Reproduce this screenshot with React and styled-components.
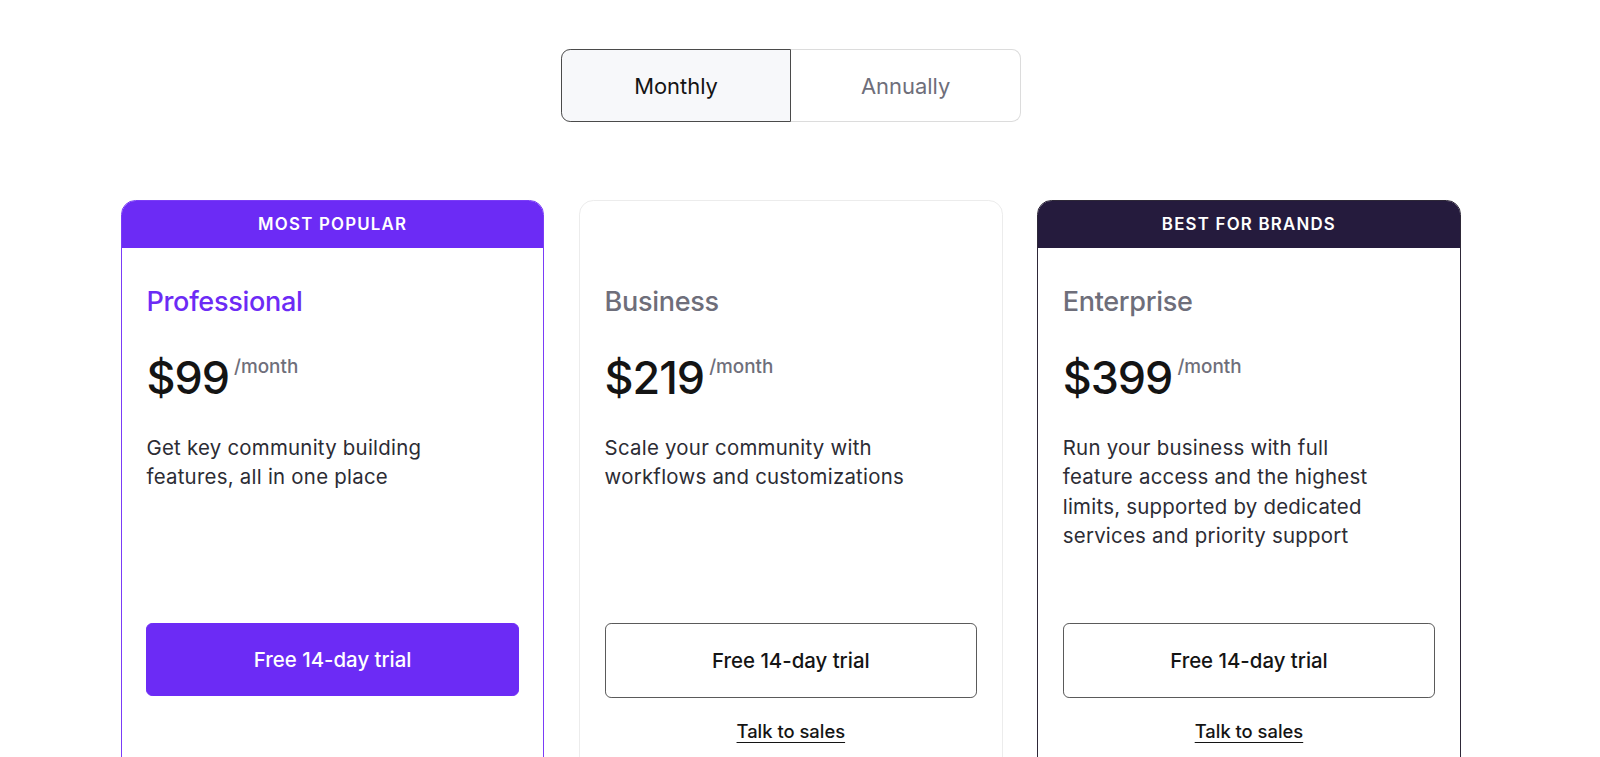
import React from 'react';
import styled, { createGlobalStyle } from 'styled-components';

const Global = createGlobalStyle`
  body {
    margin: 0;
    background: #fff;
    font-family: Inter, "Noto Sans", sans-serif;
    color: #141414;
    overflow: hidden;
  }
`;

const Page = styled.div`
  display: flex;
  flex-direction: column;
  align-items: center;
  padding: 48px 18px 0 0;
  height: 742px;
  overflow: hidden;
  box-sizing: border-box;
  zoom: 1.0204;
`;

const Toggle = styled.div`
  display: flex;
  flex-shrink: 0;
  width: 451px;
  height: 72px;
`;

const ToggleOption = styled.button`
  flex: 1;
  font-family: inherit;
  font-size: 21.5px;
  font-weight: 400;
  cursor: pointer;
  color: ${p => (p.active ? '#141414' : '#6e6e7a')};
  background: ${p => (p.active ? '#f7f8fa' : '#fff')};
  border: 1px solid ${p => (p.active ? '#4a4a4a' : '#dcdcdc')};
  border-radius: ${p => (p.left ? '9px 0 0 9px' : '0 9px 9px 0')};
  ${p => (p.left ? '' : 'border-left: none;')}
`;

const Cards = styled.div`
  display: flex;
  flex-shrink: 0;
  gap: 34px;
  margin-top: 76px;
`;

const Card = styled.div`
  width: 415px;
  height: 600px;
  flex-shrink: 0;
  box-sizing: border-box;
  border: 1px solid ${p => p.border};
  border-radius: 14px;
  overflow: hidden;
  display: flex;
  flex-direction: column;
`;

const Banner = styled.div`
  height: 47px;
  flex-shrink: 0;
  background: ${p => p.bg || 'transparent'};
  color: #fff;
  font-size: 16.5px;
  font-weight: 600;
  letter-spacing: 1.2px;
  display: flex;
  align-items: center;
  justify-content: center;
  margin: -1px -1px 0;
`;

const Body = styled.div`
  padding: 36px 24px 0 24px;
  display: flex;
  flex-direction: column;
`;

const Title = styled.h3`
  margin: 0;
  font-size: 26.5px;
  font-weight: 500;
  letter-spacing: -0.3px;
  color: ${p => p.color};
  line-height: 34px;
`;

const PriceRow = styled.div`
  display: flex;
  align-items: flex-start;
  margin-top: 30px;
  height: 56px;
`;

const Price = styled.span`
  font-size: 44px;
  font-weight: 500;
  letter-spacing: -1px;
  line-height: 56px;
  color: #141414;
`;

const Per = styled.span`
  font-size: 18.5px;
  font-weight: 500;
  color: #6e6e7a;
  margin-left: 5px;
  margin-top: 5px;
`;

const Desc = styled.p`
  margin: 25px 0 0;
  font-size: 20px;
  letter-spacing: 0.25px;
  line-height: 29px;
  color: #2c2c34;
  height: 167px;
  max-width: 305px;
`;

const TrialButton = styled.button`
  margin-top: 20px;
  height: ${p => (p.primary ? '71px' : '73px')};
  border-radius: 6px;
  font-family: inherit;
  font-size: 20px;
  font-weight: 500;
  cursor: pointer;
  background: ${p => (p.primary ? '#6c2bf5' : '#fff')};
  color: ${p => (p.primary ? '#fff' : '#141414')};
  border: 1px solid ${p => (p.primary ? '#6c2bf5' : '#5a5a5a')};
`;

const Sales = styled.a`
  align-self: center;
  margin-top: 22px;
  font-size: 18px;
  font-weight: 500;
  color: #141414;
  text-decoration: underline;
  text-underline-offset: 4px;
`;

const plans = [
  {
    name: 'Professional',
    price: '$99',
    desc: 'Get key community building features, all in one place',
    banner: 'MOST POPULAR',
    bannerBg: '#6c2bf5',
    border: '#7a3cf7',
    titleColor: '#6c2bf5',
    primary: true,
  },
  {
    name: 'Business',
    price: '$219',
    desc: 'Scale your community with workflows and customizations',
    border: '#ececec',
    titleColor: '#6e6e7a',
    sales: true,
  },
  {
    name: 'Enterprise',
    price: '$399',
    desc: 'Run your business with full feature access and the highest limits, supported by dedicated services and priority support',
    banner: 'BEST FOR BRANDS',
    bannerBg: '#251b3d',
    border: '#2e2838',
    titleColor: '#6e6e7a',
    sales: true,
  },
];

export default function App() {
  return (
    <>
      <Global />
      <Page>
        <Toggle>
          <ToggleOption active left>Monthly</ToggleOption>
          <ToggleOption>Annually</ToggleOption>
        </Toggle>
        <Cards>
          {plans.map(p => (
            <Card key={p.name} border={p.border}>
              <Banner bg={p.bannerBg}>{p.banner}</Banner>
              <Body>
                <Title color={p.titleColor}>{p.name}</Title>
                <PriceRow>
                  <Price>{p.price}</Price>
                  <Per>/month</Per>
                </PriceRow>
                <Desc>{p.desc}</Desc>
                <TrialButton primary={p.primary}>Free 14-day trial</TrialButton>
                {p.sales && <Sales href="#">Talk to sales</Sales>}
              </Body>
            </Card>
          ))}
        </Cards>
      </Page>
    </>
  );
}
